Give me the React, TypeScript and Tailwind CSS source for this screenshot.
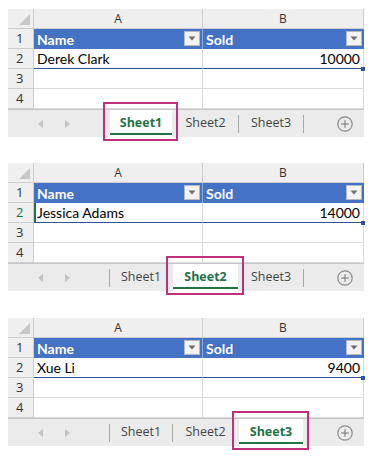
import React from "react";

type BlockProps = {
  name: string;
  sold: string;
  active: number;
  greenA2?: boolean;
  mt: string;
};

const cellFont = { fontFamily: "Lato, 'Open Sans', sans-serif" };
const uiFont = { fontFamily: "'Open Sans', 'Noto Sans', sans-serif" };

function Dropdown() {
  return (
    <div className="absolute right-[2px] top-[2px] w-[16px] h-[15px] bg-[#f3f3f3] border border-[#b8b8b8] flex items-center justify-center">
      <svg width="8" height="5" viewBox="0 0 8 5">
        <polygon points="0.5,0.5 7.5,0.5 4,4.5" fill="#6d6d6d" />
      </svg>
    </div>
  );
}

function Tab({ label, isActive, w }: { label: string; isActive: boolean; w: string }) {
  if (isActive) {
    return (
      <div className={`relative ${w} h-full`}>
        <div className="absolute inset-0 bg-white" />
        <div className="absolute left-0 right-0 bottom-[2px] h-[2px] bg-[#217346]" />
        <div
          className="relative h-full flex items-center justify-center text-[12.5px] font-bold text-[#217346]"
          style={uiFont}
        >
          {label}
        </div>
        <div className="absolute left-[-7px] right-[-6px] top-[-8px] bottom-[-4px] border-2 border-[#c2307c] pointer-events-none" />
      </div>
    );
  }
  return (
    <div
      className={`${w} h-full flex items-center justify-center text-[12.5px] text-[#444]`}
      style={uiFont}
    >
      {label}
    </div>
  );
}

function Sep({ hidden }: { hidden: boolean }) {
  return <div className={`w-px h-[18px] self-center ${hidden ? "bg-transparent" : "bg-[#a8a8a8]"}`} />;
}

function Block({ name, sold, active, greenA2, mt }: BlockProps) {
  const rowBorder = "border-b border-[#dadada]";
  return (
    <div className={`ml-[8px] w-[356px] ${mt}`}>
      {/* column header */}
      <div className="flex h-[20px] bg-[#efefef] border-b border-[#cdcdcd]" style={uiFont}>
        <div className="relative w-[26px] border-r border-[#cdcdcd]">
          <svg className="absolute right-[3px] bottom-[3px]" width="11" height="11" viewBox="0 0 11 11">
            <polygon points="11,0 11,11 0,11" fill="#c8c8c8" />
          </svg>
        </div>
        <div className="w-[169px] border-r border-[#cdcdcd] flex items-center justify-center text-[12px] text-[#333]">A</div>
        <div className="w-[161px] border-r border-[#cdcdcd] flex items-center justify-center text-[12px] text-[#333]">B</div>
      </div>
      {/* row 1 */}
      <div className="flex h-[20px]">
        <div className="w-[26px] bg-[#efefef] border-r border-b border-[#cdcdcd] flex items-center pl-[8px] text-[13px] text-[#333]" style={uiFont}>1</div>
        <div className="relative w-[169px] bg-[#4472c4] border-r border-[#8ea9db] flex items-center pl-[3px] text-[14px] font-bold text-white" style={cellFont}>
          Name
          <Dropdown />
        </div>
        <div className="relative w-[161px] bg-[#4472c4] flex items-center pl-[3px] text-[14px] font-bold text-white" style={cellFont}>
          Sold
          <Dropdown />
        </div>
      </div>
      {/* row 2 */}
      <div className="flex h-[20px]">
        <div
          className={`w-[26px] bg-[#efefef] border-r border-b border-[#cdcdcd] flex items-center pl-[8px] text-[13px] ${greenA2 ? "text-[#217346] bg-[#e2e2e2]" : "text-[#333]"}`}
          style={uiFont}
        >
          2
        </div>
        <div
          className={`relative w-[169px] bg-white border-r border-[#dadada] border-b border-b-[#2f5597] flex items-center pl-[3px] text-[14px] text-black`}
          style={cellFont}
        >
          {greenA2 && <div className="absolute left-0 top-0 bottom-[-1px] w-[2px] bg-[#217346]" />}
          {name}
        </div>
        <div
          className="relative w-[161px] bg-white border-r border-[#dadada] border-b border-b-[#2f5597] flex items-center justify-end pr-[3px] text-[14px] text-black"
          style={cellFont}
        >
          {sold}
          <div className="absolute right-[-2px] bottom-[-3px] w-[4px] h-[4px] bg-[#2f5597]" />
        </div>
      </div>
      {/* rows 3, 4 */}
      {["3", "4"].map((n) => (
        <div key={n} className="flex h-[20px]">
          <div className="w-[26px] bg-[#efefef] border-r border-b border-[#cdcdcd] flex items-center pl-[8px] text-[13px] text-[#333]" style={uiFont}>
            {n}
          </div>
          <div className={`w-[169px] bg-white border-r border-[#dadada] ${rowBorder}`} />
          <div className={`w-[161px] bg-white border-r border-[#dadada] ${rowBorder}`} />
        </div>
      ))}
      {/* tab bar */}
      <div className="flex h-[28px] bg-[#ebebeb] border-t border-[#c6c6c6]">
        <div className="w-[101px] flex items-center">
          <svg className="ml-[30px]" width="5" height="8" viewBox="0 0 5 8">
            <polygon points="5,0 5,8 0,4" fill="#c4c4c4" />
          </svg>
          <svg className="ml-[22px]" width="5" height="8" viewBox="0 0 5 8">
            <polygon points="0,0 0,8 5,4" fill="#c4c4c4" />
          </svg>
        </div>
        <Sep hidden={active === 1} />
        <Tab label="Sheet1" isActive={active === 1} w="w-[62px]" />
        <Sep hidden={active === 1 || active === 2} />
        <Tab label="Sheet2" isActive={active === 2} w="w-[65px]" />
        <Sep hidden={active === 2 || active === 3} />
        <Tab label="Sheet3" isActive={active === 3} w="w-[64px]" />
        <Sep hidden={active === 3} />
        <div className="flex-1 flex items-center justify-end pr-[11px]">
          <svg width="16" height="16" viewBox="0 0 16 16">
            <circle cx="8" cy="8" r="7.2" fill="none" stroke="#8a8a8a" strokeWidth="1.2" />
            <line x1="8" y1="4.2" x2="8" y2="11.8" stroke="#8a8a8a" strokeWidth="1.3" />
            <line x1="4.2" y1="8" x2="11.8" y2="8" stroke="#8a8a8a" strokeWidth="1.3" />
          </svg>
        </div>
      </div>
    </div>
  );
}

export default function App() {
  return (
    <div className="w-[375px] h-[456px] bg-white overflow-hidden pt-[9px]">
      <Block name="Derek Clark" sold="10000" active={1} mt="mt-0" />
      <Block name="Jessica Adams" sold="14000" active={2} greenA2 mt="mt-[26px]" />
      <Block name="Xue Li" sold="9400" active={3} mt="mt-[27px]" />
    </div>
  );
}
